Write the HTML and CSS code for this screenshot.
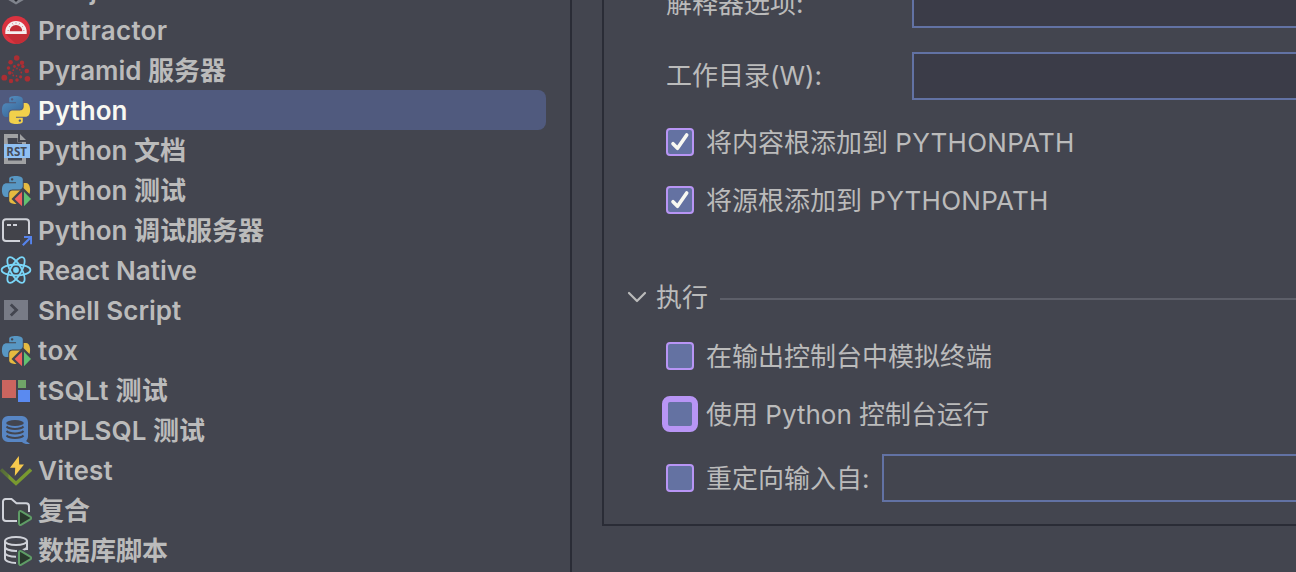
FILE: index.html
```html
<!DOCTYPE html>
<html lang="zh-CN">
<head>
<meta charset="utf-8">
<title>Python</title>
<link rel="stylesheet" href="styles.css">
</head>
<body>
<svg class="defs" aria-hidden="true">
  <defs>
    <path id="snake" d="M14.25.18l.9.2.73.26.59.3.45.32.34.34.25.34.16.33.1.3.04.26.02.2-.01.13V8.5l-.05.63-.13.55-.21.46-.26.38-.3.31-.33.25-.35.19-.35.14-.33.1-.3.07-.26.04-.21.02H8.77l-.69.05-.59.14-.5.22-.41.27-.33.32-.27.35-.2.36-.15.37-.1.35-.07.32-.04.27-.02.21v3.06H3.17l-.21-.03-.28-.07-.32-.12-.35-.18-.36-.26-.36-.36-.35-.46-.32-.59-.28-.73-.21-.88-.14-1.05-.05-1.23.06-1.22.16-1.04.24-.87.32-.71.36-.57.4-.44.42-.33.42-.24.4-.16.36-.1.32-.05.24-.01h.16l.06.01h8.16v-.83H6.18l-.01-2.75-.02-.37.05-.34.11-.31.17-.28.25-.26.31-.23.38-.2.44-.18.51-.15.58-.12.64-.1.71-.06.77-.04.84-.02 1.27.05zm-6.3 1.98l-.23.33-.08.41.08.41.23.34.33.22.41.09.41-.09.33-.22.23-.34.08-.41-.08-.41-.23-.33-.33-.22-.41-.09-.41.09z"/>
    <g id="pytest">
      <g transform="translate(2 2) scale(1.1667)">
        <use href="#snake" fill="#5897c4"/>
        <use href="#snake" fill="#e5ba40" transform="rotate(180 12 12)"/>
      </g>
      <path d="M11.500 25 23 13.500 34.500 25 23 36.500z" fill="#43454f"/>
      <path d="M14.600 25 22 17.800V32.200z" fill="#f0605d"/>
      <path d="M31 25 24 17.800V32.200z" fill="#62c172"/>
    </g>
    <path id="play" d="M19 18.700c0-1.600 1.200-2.200 2.400-1.400l8.800 5.300c1.300.8 1.300 2 0 2.800l-8.800 5.300c-1.200.8-2.400.2-2.400-1.400z" fill="#29382c" stroke="#5f9c66" stroke-width="2"/>
    <linearGradient id="blue" x1="0" y1="0" x2="0.600" y2="1"><stop offset="0" stop-color="#5791c4"/><stop offset="1" stop-color="#3a6a9c"/></linearGradient>
    <linearGradient id="check" x1="0" y1="0" x2="1" y2="0"><stop offset="0" stop-color="#566b38"/><stop offset=".22" stop-color="#5f7939"/><stop offset=".28" stop-color="#79992f"/><stop offset="1" stop-color="#79992f"/></linearGradient>
  </defs>
</svg>
<div class="window">
  <ul class="types">
    <li class="type"><svg class="icon" viewBox="0 0 32 32"><path d="M16 2 28 9v14.500L16 30.500 4 23.500V9z" fill="#80848d"/><path d="m16 8 7 4v9l-7 7-7-7v-9z" fill="#262831"/></svg><span>NW.js</span></li>
    <li class="type loose"><svg class="icon" viewBox="0 0 32 32"><circle cx="16" cy="16" r="14" fill="#db3340"/><path d="M5.500 20 16 29.900A14 14 0 0 0 29.800 18L23.500 10.500z" fill="#c42d36"/><path d="M5.300 19.900v-2.200a10.700 10.700 0 0 1 21.400 0v2.200z" fill="#f4f0f0"/><path d="M9.800 17.200a6.200 6.200 0 0 1 12.400 0z" fill="#c42d36"/><path d="M7.500 16.500h1.400M9 12.200l1.200.9M12.300 9.200l.7 1.300M16 8.200v1.400M19.700 9.200l-.7 1.300M23 12.200l-1.200.9M24.500 16.500h-1.400" stroke="#d97980" stroke-width=".8"/></svg><span>Protractor</span></li>
    <li class="type"><svg class="icon" viewBox="0 0 32 32" fill="#ab2e33"><circle cx="16.700" cy="4" r="2.800"/><circle cx="10.600" cy="8.300" r="2.300"/><circle cx="22" cy="8.800" r="2.200"/><circle cx="8.500" cy="14" r="1.800"/><circle cx="14.500" cy="12.500" r="1.400"/><circle cx="18.500" cy="11" r="1.400"/><circle cx="22.800" cy="12.500" r="1.700"/><circle cx="26.800" cy="17" r="2.300"/><circle cx="9.800" cy="18.800" r="1.900"/><circle cx="4.300" cy="23.700" r="2.900"/><circle cx="11" cy="27" r="2.200"/><circle cx="17" cy="26" r="1.800"/><circle cx="20.600" cy="22.800" r="1.600"/><circle cx="27.400" cy="24.700" r="2.800"/><circle cx="13.300" cy="16.200" r=".9"/><circle cx="12.600" cy="19" r=".8"/><circle cx="13.300" cy="21.500" r=".9"/><circle cx="16.500" cy="22" r=".9"/><circle cx="17" cy="14.500" r=".9"/><circle cx="19.800" cy="15.800" r=".9"/><circle cx="21.300" cy="18.500" r=".9"/></svg><span>Pyramid 服务器</span></li>
    <li class="type selected"><svg class="icon" viewBox="0 0 32 32"><g transform="translate(2 2) scale(1.1667)"><use href="#snake" fill="url(#blue)"/><use href="#snake" fill="#f1d04b" transform="rotate(180 12 12)"/></g></svg><span>Python</span></li>
    <li class="type"><svg class="icon" viewBox="0 0 32 32"><path d="M4 0h14v8h8v2H8V4h-.500L8 10H4zM20 0l6 6h-6zM4 24h4v2.500h14V24h4v6H4z" fill="#a0a1a3"/><path d="M8 4h9.500v4.500H22V10H8z" fill="#43454f"/><path d="M4 10h26v14H4z" fill="#8fc0f3"/><text class="rst" x="6.300" y="21.700" textLength="20.700" lengthAdjust="spacingAndGlyphs">RST</text></svg><span>Python 文档</span></li>
    <li class="type"><svg class="icon" viewBox="0 0 32 32"><use href="#pytest"/></svg><span>Python 测试</span></li>
    <li class="type"><svg class="icon" viewBox="0 0 32 32" fill="none"><path d="M20 27H6a3 3 0 0 1-3-3V8.200a3 3 0 0 1 3-3h20a3 3 0 0 1 3 3V20" fill="#42434a" stroke="#d0d2d9" stroke-width="2"/><path d="M7 11h4M13 11h4" stroke="#d0d2d9" stroke-width="1.800"/><path d="m22.800 31.200 8-8M24 23h7.200v7.200" stroke="#5583ec" stroke-width="2.200"/></svg><span>Python 调试服务器</span></li>
    <li class="type"><svg class="icon" viewBox="0 0 32 32" fill="none" stroke="#7ad6f8" stroke-width="1.800"><ellipse cx="16" cy="16" rx="14.400" ry="5.500"/><ellipse cx="16" cy="16" rx="14.400" ry="5.500" transform="rotate(60 16 16)"/><ellipse cx="16" cy="16" rx="14.400" ry="5.500" transform="rotate(120 16 16)"/><circle cx="16" cy="16" r="2.900" fill="#7ad6f8" stroke="none"/></svg><span>React Native</span></li>
    <li class="type"><svg class="icon" viewBox="0 0 32 32"><path d="M4 6h24v20H4z" fill="#787b86"/><path d="m10.800 10.500 5.700 5.500-5.700 5.500" fill="none" stroke="#43454f" stroke-width="2.800"/></svg><span>Shell Script</span></li>
    <li class="type looser"><svg class="icon" viewBox="0 0 32 32"><use href="#pytest"/></svg><span>tox</span></li>
    <li class="type loose"><svg class="icon" viewBox="0 0 32 32"><path d="M2 6h14v18H2z" fill="#cb655f"/><path d="M18 6h8v8h-8z" fill="#70a567"/><path d="M18 16h12v12H18z" fill="#5a8af0"/></svg><span>tSQLt 测试</span></li>
    <li class="type"><svg class="icon" viewBox="0 0 32 32"><path d="M8 2h14a6 6 0 0 1 6 6v14c0 2.500-.8 4-2 5l4 2.800c-3 .7-6 .2-8-1.800H8a6 6 0 0 1-6-6V8a6 6 0 0 1 6-6z" fill="#5886c4"/><ellipse cx="15" cy="9" rx="8.800" ry="3" fill="#43454f"/><path d="M6.500 12.500c3 3.300 14 3.300 17 0M6.500 17c3 3.300 14 3.300 17 0M6.500 21.500c3 3.300 14 3.300 17 0" fill="none" stroke="#43454f" stroke-width="1.900"/></svg><span>utPLSQL 测试</span></li>
    <li class="type loose"><svg class="icon" viewBox="0 0 32 32"><path d="M1 15.500 16 29.500l15-14" fill="none" stroke="url(#check)" stroke-width="3.400"/><path d="M18.800 2 10 13.800h5.200L14.800 22 24 10.500h-4.800z" fill="#f6c94d"/></svg><span>Vitest</span></li>
    <li class="type"><svg class="icon" viewBox="0 0 32 32"><path d="M17 27H6a3 3 0 0 1-3-3V7.500a2.500 2.500 0 0 1 2.500-2.500h6l5 4.300H26a3 3 0 0 1 3 3V18" fill="#42434a" stroke="#d0d2d9" stroke-width="2"/><use href="#play"/></svg><span>复合</span></li>
    <li class="type"><svg class="icon" viewBox="0 0 32 32"><path d="M5 7v17.500c0 2.500 4.500 4.500 11 4.500V16H27V7" fill="#42434a"/><path d="M5 7c0-2.300 4.900-4 11-4s11 1.700 11 4-4.900 4-11 4S5 9.300 5 7zv17.500C5 27 9.900 29 16 29M27 7v9M5 12.700c0 2.500 4.900 4.200 11 4.200s11-1.700 11-4.200M5 18.700c0 2.400 4.900 4.100 11 4.100" fill="none" stroke="#d0d2d9" stroke-width="2"/><path d="M17 15h5l10 7v10H17z" fill="#43454f"/><use href="#play"/></svg><span>数据库脚本</span></li>
  </ul>
  <main class="detail">
    <div class="pane">
      <div class="field"><span class="caption">解释器选项:</span><div class="input filled"></div></div>
      <div class="field workdir"><span class="caption">工作目录(W):</span><div class="input filled"></div></div>
      <label class="option content-root"><span class="box"><svg viewBox="0 0 24 24"><path d="m5 13.700 4.500 4.600L18.700 5"/></svg></span><span class="name">将内容根添加到 <span class="loose">PYTHONPATH</span></span></label>
      <label class="option"><span class="box"><svg viewBox="0 0 24 24"><path d="m5 13.700 4.500 4.600L18.700 5"/></svg></span><span class="name">将源根添加到 <span class="loose">PYTHONPATH</span></span></label>
      <div class="section"><svg class="chevron" viewBox="0 0 20 12"><path d="m2 2 8 8 8-8"/></svg><span>执行</span><i class="rule"></i></div>
      <label class="option"><span class="box"></span><span class="name">在输出控制台中模拟终端</span></label>
      <label class="option"><span class="box focused"></span><span class="name">使用 Python 控制台运行</span></label>
      <label class="option redirect"><span class="box"></span><span class="name">重定向输入自:</span><span class="input"></span></label>
    </div>
  </main>
</div>
</body>
</html>
```
FILE: styles.css
```css
* { box-sizing: border-box; }

body {
  margin: 0;
  background: #43454f;
  color: #bbbbbb;
  font: 26px/40px Inter, "Noto Sans CJK SC", sans-serif;
  overflow: hidden;
}

.defs { display: block; width: 0; height: 0; }

.window {
  display: flex;
  width: 1296px;
  height: 572px;
  overflow: hidden;
}

.types {
  flex: none;
  width: 572px;
  height: 620px;
  margin: -30px 0 0;
  padding: 0 24px 0 0;
  border-right: 2px solid #2a2c36;
  list-style: none;
  font-weight: 600;
}

.type {
  display: flex;
  align-items: center;
  gap: 6px;
  height: 40px;
  white-space: nowrap;
}
.type > span, .name { padding-top: 2px; }

.selected {
  background: #505a7e;
  border-radius: 0 8px 8px 0;
  color: #f8f8f2;
}

.loose { letter-spacing: 0.25px; }
.looser { letter-spacing: 0.5px; }

.icon { flex: none; width: 32px; height: 32px; overflow: hidden; }

.rst { font: 700 13px "Open Sans", sans-serif; fill: #454c59; }

.detail { flex: 1; min-width: 0; padding-left: 30px; }

.pane {
  display: flex;
  flex-direction: column;
  height: 526px;
  border: solid #2a2c36;
  border-width: 0 0 2px 2px;
  padding-left: 62px;
}

.field { display: flex; flex: none; height: 48px; margin-top: -20px; }
.workdir { margin-top: 24px; }
.caption { width: 246px; line-height: 48px; white-space: nowrap; }
.input { flex: 1; height: 48px; border: 2px solid #6272a4; border-right: 0; }
.filled { background: #3b3c48; }

.option {
  display: flex;
  flex: none;
  align-items: center;
  gap: 12px;
  height: 40px;
  margin-top: 18px;
  white-space: nowrap;
}
.content-root { margin-top: 22px; }
.redirect { height: 48px; margin-top: 20px; }

.box {
  flex: none;
  width: 28px;
  height: 28px;
  border: 2px solid #b895f5;
  border-radius: 4px;
  background: #6472a2;
}
.box svg {
  display: block;
  width: 24px;
  height: 24px;
  fill: none;
  stroke: #f8f8f2;
  stroke-width: 3.6;
  stroke-linecap: round;
  stroke-linejoin: round;
}
.focused {
  width: 36px;
  height: 36px;
  margin: 0 -4px;
  border-width: 6px;
  border-radius: 8px;
}

.section {
  display: flex;
  flex: none;
  align-items: center;
  height: 40px;
  margin: 58px 0 0 -39px;
}
.chevron {
  width: 20px;
  height: 12px;
  margin: 0 9px 3px 0;
  fill: none;
  stroke: #bbbbbb;
  stroke-width: 2.2;
  stroke-linecap: round;
  stroke-linejoin: round;
}
.rule { flex: 1; height: 2px; margin: 2px 0 0 12px; background: #5d5f69; }
```
